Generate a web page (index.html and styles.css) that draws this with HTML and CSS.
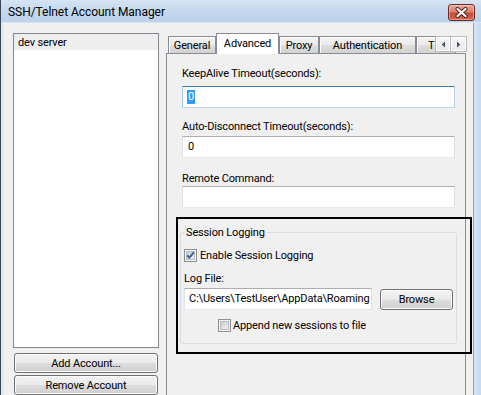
FILE: index.html
```
<!DOCTYPE html>
<html>
<head>
<meta charset="utf-8">
<title>SSH/Telnet Account Manager</title>
<link rel="stylesheet" href="styles.css">
</head>
<body>
<div class="window">
  <div class="titlebar">
    <span class="title">SSH/Telnet Account Manager</span>
    <span class="close">
      <svg width="13" height="11" viewBox="0 0 13 11">
        <path d="M2.5 2 L10.5 9 M10.5 2 L2.5 9" stroke="#4b2019" stroke-width="4" stroke-linecap="round" fill="none"/>
        <path d="M2.5 2 L10.5 9 M10.5 2 L2.5 9" stroke="#ffffff" stroke-width="2.2" stroke-linecap="round" fill="none"/>
      </svg>
    </span>
  </div>
  <div class="frame">
    <div class="client">
      <div class="leftcol">
        <div class="listbox">
          <div class="item">dev server</div>
        </div>
        <div class="btn acct">Add Account...</div>
        <div class="btn acct gap">Remove Account</div>
      </div>
      <div class="tabctl">
        <div class="tabs">
          <div class="tab w-general">General</div>
          <div class="tab sel w-adv">Advanced</div>
          <div class="tab w-proxy">Proxy</div>
          <div class="tab w-auth">Authentication</div>
          <div class="tab w-t">T</div>
          <div class="tabscroll">
            <span class="arrow"><svg width="5" height="7" viewBox="0 0 5 7"><path d="M4 0.5 L0.8 3.5 L4 6.5 Z" fill="#3d5075"/></svg></span>
            <span class="arrow"><svg width="5" height="7" viewBox="0 0 5 7"><path d="M1 0.5 L4.2 3.5 L1 6.5 Z" fill="#3d5075"/></svg></span>
          </div>
        </div>
        <div class="panel">
          <div class="lbl">KeepAlive Timeout(seconds):</div>
          <div class="field focus f1"><span class="selected">0</span></div>
          <div class="lbl l2">Auto-Disconnect Timeout(seconds):</div>
          <div class="field f2">0</div>
          <div class="lbl l3">Remote Command:</div>
          <div class="field f3"></div>
          <fieldset class="group">
            <legend>Session Logging</legend>
            <div class="check first">
              <svg class="cb" width="13" height="13" viewBox="0 0 13 13">
                <defs><linearGradient id="g1" x1="0" y1="0" x2="1" y2="1"><stop offset="0" stop-color="#c3ccd6"/><stop offset="1" stop-color="#eef2f6"/></linearGradient></defs>
                <rect x="0.5" y="0.5" width="12" height="12" fill="#f4f6f8" stroke="#8e8f8f"/>
                <rect x="2.5" y="2.5" width="8" height="8" fill="url(#g1)" stroke="#b4bcc6"/>
                <path d="M3.2 6.3 L5.4 8.6 L9.8 3.4" fill="none" stroke="#425a8f" stroke-width="1.9"/>
              </svg>
              <span>Enable Session Logging</span>
            </div>
            <div class="lbl logl">Log File:</div>
            <div class="logrow">
              <div class="field path">C:\Users\TestUser\AppData\Roaming</div>
              <div class="btn browse">Browse</div>
            </div>
            <div class="check append">
              <svg class="cb" width="13" height="13" viewBox="0 0 13 13">
                <defs><linearGradient id="g2" x1="0" y1="0" x2="1" y2="1"><stop offset="0" stop-color="#c6cad0"/><stop offset="1" stop-color="#f5f5f5"/></linearGradient></defs>
                <rect x="0.5" y="0.5" width="12" height="12" fill="#f4f4f4" stroke="#8e8f8f"/>
                <rect x="2.5" y="2.5" width="8" height="8" fill="url(#g2)" stroke="#b8bcc2"/>
              </svg>
              <span>Append new sessions to file</span>
            </div>
          </fieldset>
          <div class="highlight-box"></div>
        </div>
      </div>
    </div>
  </div>
</div>
</body>
</html>
```
FILE: styles.css
```
* { box-sizing: border-box; }
html, body { margin: 0; padding: 0; }
body {
  width: 481px;
  height: 395px;
  overflow: hidden;
  background: #f0f0f0;
  font-family: Roboto, "Liberation Sans", sans-serif;
  font-size: 11px;
  letter-spacing: -0.15px;
  line-height: 15px;
  color: #000;
}
.window {
  width: 481px;
  height: 395px;
  display: flex;
  flex-direction: column;
  border-left: 1px solid #3a4552;
  overflow: hidden;
}
.titlebar {
  height: 23px;
  flex: none;
  display: flex;
  justify-content: space-between;
  align-items: flex-start;
  padding: 4px 6px 0 7px;
  background: linear-gradient(#d6e4f4, #c5d9ef 45%, #bcd2eb);
  border-bottom: 1px solid #d9e5f2;
}
.title { margin-top: 1px; font-size: 12px; letter-spacing: -0.05px; }
.close {
  width: 27px;
  height: 17px;
  border: 1px solid #6c2b22;
  border-radius: 3px;
  background: linear-gradient(#e9a899, #d9806e 48%, #c44b36 52%, #d2654d);
  box-shadow: inset 0 0 0 1px rgba(255,255,255,0.35);
  display: flex;
  align-items: center;
  justify-content: center;
}
.frame {
  flex: 1;
  display: flex;
  border-left: 3px solid #dfe8f3;
  min-height: 0;
}
.client {
  flex: 1;
  display: flex;
  padding: 10px 0 0 9px;
  border-right: 1px solid #86a9d1;
  background: #f0f0f0;
}
.frame::after {
  content: "";
  width: 7px;
  flex: none;
  background: linear-gradient(90deg, #d5e4f4, #c6d9ee);
}
.leftcol {
  width: 146px;
  flex: none;
  display: flex;
  flex-direction: column;
}
.listbox {
  height: 318px;
  border: 1px solid #828790;
  background: #fff;
}
.item {
  height: 16px;
  padding: 1px 0 0 4px;
  background: #eeeeee;
}
.btn {
  border: 1px solid #707070;
  border-radius: 3px;
  background: linear-gradient(#f2f2f2, #ebebeb 48%, #dddddd 52%, #cfcfcf);
  box-shadow: inset 0 0 0 1px #fbfbfb;
  text-align: center;
  display: flex;
  align-items: center;
  justify-content: center;
}
.acct {
  width: 144px;
  height: 20px;
  margin: 5px 0 0 1px;
}
.acct.gap { margin-top: 2px; }
.tabctl {
  width: 300px;
  margin-left: 7px;
  flex: none;
}
.tabs {
  position: relative;
  height: 20px;
  display: flex;
  align-items: flex-end;
  padding-left: 2px;
}
.tab {
  height: 17px;
  border: 1px solid #898c95;
  border-bottom: none;
  background: linear-gradient(#f3f3f3, #ebebeb 48%, #dedede 52%, #d2d2d2);
  box-shadow: inset 1px 1px #fcfcfc;
  text-align: center;
  padding-top: 1px;
  white-space: nowrap;
  overflow: hidden;
  flex: none;
}
.tab.sel {
  height: 21px;
  margin-bottom: -1px;
  background: #fff;
  box-shadow: none;
  padding-top: 2px;
  position: relative;
  z-index: 1;
}
.w-general { width: 48px; }
.w-adv { width: 63px; }
.w-proxy { width: 40px; }
.w-auth { width: 97px; }
.w-t { width: 40px; text-align: left; padding-left: 11px; }
.tabscroll {
  position: absolute;
  right: -1px;
  top: 3px;
  width: 32px;
  height: 16px;
  display: flex;
  z-index: 2;
}
.arrow {
  width: 16px;
  height: 16px;
  border: 1px solid #b9b9b9;
  background: linear-gradient(#f7f7f7, #e9e9e9);
  box-shadow: inset 0 0 0 1px #fff;
  display: flex;
  align-items: center;
  justify-content: center;
}
.arrow + .arrow { border-left: none; }
.panel {
  position: relative;
  height: 360px;
  border: 1px solid #898c95;
  background: #f0f0f0;
  padding: 12px 0 0 15px;
}
.lbl { white-space: nowrap; }
.l2 { margin-top: 11px; }
.l3 { margin-top: 13px; }
.field {
  width: 273px;
  height: 22px;
  border: 1px solid;
  border-color: #abadb3 #dbdfe6 #e3e9ef #e2e3ea;
  background: #fff;
  padding: 0 5px;
  line-height: 20px;
  white-space: nowrap;
  overflow: hidden;
}
.f1 { margin-top: 5px; }
.f2 { margin-top: 2px; }
.f3 { margin-top: 0; }
.field.focus { border-color: #3d7bad #b5cfe7 #b7d9ed #a4c9e3; padding-left: 4px; }
.selected {
  background: #3399ff;
  color: #fff;
  padding: 0 1px;
  display: inline-block;
  line-height: 14px;
}
.group {
  margin: 17px 0 0 -2px;
  width: 277px;
  border: 1px solid #d5dfe5;
  border-radius: 3px;
  padding: 0 3px 10px 3px;
  min-width: 0;
}
.group legend {
  padding: 0 2px;
  line-height: 15px;
}
.check {
  display: flex;
  align-items: center;
  height: 15px;
}
.check .cb { flex: none; margin-right: 3px; }
.check.first { margin-top: 8px; }
.logl { margin-top: 8px; }
.logrow {
  display: flex;
  align-items: flex-start;
  margin-top: 2px;
}
.field.path {
  width: 188px;
  padding-left: 4px;
}
.browse {
  width: 73px;
  height: 21px;
  margin: 1px 0 0 8px;
}
.check.append { margin: 8px 0 0 34px; }
.check.append .cb { margin-right: 2px; }
.highlight-box {
  position: absolute;
  left: 9px;
  top: 163px;
  width: 296px;
  height: 137px;
  border: 2px solid #000;
  pointer-events: none;
}
```
